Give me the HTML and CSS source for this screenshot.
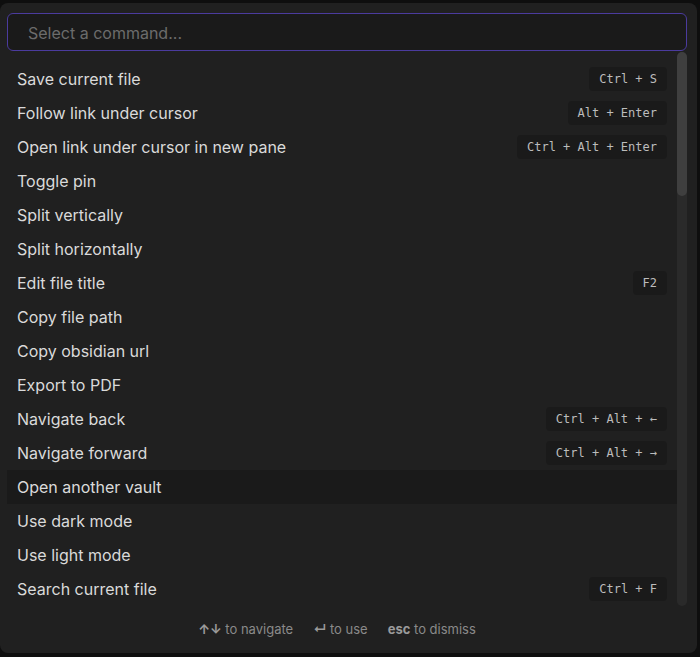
FILE: index.html
```html
<!DOCTYPE html>
<html>
<head>
<meta charset="utf-8">
<link rel="stylesheet" href="styles.css">
</head>
<body>
<div class="modal">
  <div class="search"><input class="search-input" placeholder="Select a command..."></div>
  <div class="results">
    <div class="list">
      <div class="item"><span>Save current file</span><kbd class="key">Ctrl + S</kbd></div>
      <div class="item"><span>Follow link under cursor</span><kbd class="key">Alt + Enter</kbd></div>
      <div class="item"><span>Open link under cursor in new pane</span><kbd class="key">Ctrl + Alt + Enter</kbd></div>
      <div class="item"><span>Toggle pin</span></div>
      <div class="item"><span>Split vertically</span></div>
      <div class="item"><span>Split horizontally</span></div>
      <div class="item"><span>Edit file title</span><kbd class="key">F2</kbd></div>
      <div class="item"><span>Copy file path</span></div>
      <div class="item"><span>Copy obsidian url</span></div>
      <div class="item"><span>Export to PDF</span></div>
      <div class="item"><span>Navigate back</span><kbd class="key">Ctrl + Alt + ←</kbd></div>
      <div class="item"><span>Navigate forward</span><kbd class="key">Ctrl + Alt + →</kbd></div>
      <div class="item selected"><span>Open another vault</span></div>
      <div class="item"><span>Use dark mode</span></div>
      <div class="item"><span>Use light mode</span></div>
      <div class="item"><span>Search current file</span><kbd class="key">Ctrl + F</kbd></div>
    </div>
    <div class="scrollbar"><div class="thumb"></div></div>
  </div>
  <div class="footer">
    <span class="hint"><span class="sym">↑↓</span> to navigate</span>
    <span class="hint"><span class="sym">↵</span> to use</span>
    <span class="hint"><b class="esc">esc</b> to dismiss</span>
  </div>
</div>
</body>
</html>
```
FILE: styles.css
```css
html, body {
  margin: 0;
  padding: 0;
  background: #0e0e0e;
  width: 700px;
  height: 657px;
  overflow: hidden;
  font-family: Inter, "Noto Sans", sans-serif;
}
.modal {
  margin-top: 3px;
  width: 697px;
  height: 650px;
  background: #202020;
  border-radius: 8px;
  box-sizing: border-box;
  padding: 10px 10px 0 7px;
  display: flex;
  flex-direction: column;
}
.search {
  width: 680px;
  height: 38px;
}
.search-input {
  width: 100%;
  height: 100%;
  box-sizing: border-box;
  background: #1a1a1a;
  border: 1px solid #4b3b9e;
  border-radius: 6px;
  padding: 2px 0 0 20px;
  font-family: inherit;
  font-size: 16px;
  color: #dadada;
  outline: none;
}
.search-input::placeholder {
  color: #6c6c6c;
}
.results {
  display: flex;
  height: 554px;
  margin-top: 1px;
}
.list {
  flex: 1;
  padding-top: 10px;
  overflow: hidden;
}
.item {
  height: 34px;
  display: flex;
  align-items: center;
  justify-content: space-between;
  padding: 0 10px;
  font-size: 16px;
  color: #dadada;
}
.item.selected {
  background: #1a1a1a;
}
.key {
  font-family: "DejaVu Sans Mono", monospace;
  font-size: 12px;
  color: #bcbcbc;
  background: #1a1a1a;
  border-radius: 4px;
  height: 24px;
  line-height: 24px;
  padding: 0 10px;
}
.scrollbar {
  width: 10px;
  background: #2a2a2a;
  border-radius: 5px;
}
.thumb {
  height: 144px;
  background: #3f3f3f;
  border-radius: 5px;
}
.footer {
  flex: 1;
  display: flex;
  justify-content: center;
  align-items: center;
  gap: 20px;
  padding-right: 20px;
  padding-bottom: 2px;
  font-size: 13px;
  color: #8a8a8a;
}
.sym {
  color: #9a9a9a;
  font-weight: 700;
}
.esc {
  color: #9a9a9a;
  font-weight: 700;
}
```
